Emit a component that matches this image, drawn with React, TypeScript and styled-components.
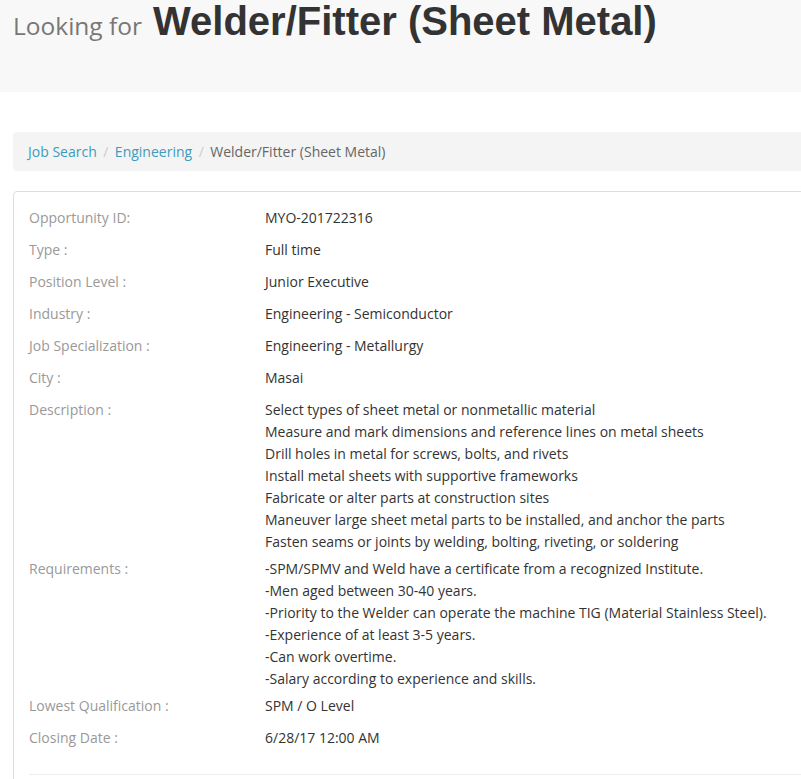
import * as React from 'react'
import styled, { createGlobalStyle } from 'styled-components'

const GlobalStyle = createGlobalStyle`
  html, body {
    margin: 0;
    padding: 0;
    background: #fff;
    overflow-x: hidden;
  }
  body {
    font-family: 'Open Sans', 'Liberation Sans', sans-serif;
    font-size: 14px;
    color: #333;
  }
`

interface IDetail {
  label: string
  lines: string[]
}

const details: IDetail[] = [
  { label: 'Opportunity ID:', lines: ['MYO-201722316'] },
  { label: 'Type :', lines: ['Full time'] },
  { label: 'Position Level :', lines: ['Junior Executive'] },
  { label: 'Industry :', lines: ['Engineering - Semiconductor'] },
  { label: 'Job Specialization :', lines: ['Engineering - Metallurgy'] },
  { label: 'City :', lines: ['Masai'] },
  {
    label: 'Description :',
    lines: [
      'Select types of sheet metal or nonmetallic material',
      'Measure and mark dimensions and reference lines on metal sheets',
      'Drill holes in metal for screws, bolts, and rivets',
      'Install metal sheets with supportive frameworks',
      'Fabricate or alter parts at construction sites',
      'Maneuver large sheet metal parts to be installed, and anchor the parts',
      'Fasten seams or joints by welding, bolting, riveting, or soldering'
    ]
  },
  {
    label: 'Requirements :',
    lines: [
      '-SPM/SPMV and Weld have a certificate from a recognized Institute.',
      '-Men aged between 30-40 years.',
      '-Priority to the Welder can operate the machine TIG (Material Stainless Steel).',
      '-Experience of at least 3-5 years.',
      '-Can work overtime.',
      '-Salary according to experience and skills.'
    ]
  },
  { label: 'Lowest Qualification :', lines: ['SPM / O Level'] },
  { label: 'Closing Date :', lines: ['6/28/17 12:00 AM'] }
]

const crumbs = ['Job Search', 'Engineering']

export default function App() {
  return (
    <>
      <GlobalStyle />
      <Header>
        <Lead>Looking for</Lead>
        <Title>Welder/Fitter (Sheet Metal)</Title>
      </Header>
      <Container>
        <Breadcrumb>
          {crumbs.map(c => (
            <Crumb key={c}>
              <CrumbLink href="#">{c}</CrumbLink>
              <Separator>/</Separator>
            </Crumb>
          ))}
          <Crumb active>Welder/Fitter (Sheet Metal)</Crumb>
        </Breadcrumb>
        <Panel>
          <DetailList>
            {details.map(d => (
              <React.Fragment key={d.label}>
                <Label>{d.label}</Label>
                <Value multi={d.lines.length > 1}>
                  {d.lines.map(l => (
                    <div key={l}>{l}</div>
                  ))}
                </Value>
              </React.Fragment>
            ))}
          </DetailList>
          <Rule />
        </Panel>
      </Container>
    </>
  )
}

const Header = styled.header`
  background: #f8f8f8;
  height: 92px;
  padding: 0 13px;
  display: flex;
  align-items: baseline;
  gap: 11px;
  white-space: nowrap;
`
const Lead = styled.span`
  font-family: 'Open Sans', sans-serif;
  font-size: 24.5px;
  color: #777;
  line-height: 44px;
`
const Title = styled.h1`
  margin: 0;
  font-family: 'Liberation Sans', Arial, sans-serif;
  font-weight: bold;
  font-size: 40px;
  color: #333;
  line-height: 42px;
`
const Container = styled.main`
  width: 820px;
  padding: 40px 0 0 13px;
`
const Breadcrumb = styled.ol`
  list-style: none;
  margin: 0 0 20px;
  padding: 9px 15px;
  background: #f4f4f4;
  border-radius: 4px;
  display: flex;
  line-height: 21px;
`
const Crumb = styled.li<{ active?: boolean }>`
  color: ${p => (p.active ? '#666' : 'inherit')};
`
const CrumbLink = styled.a`
  color: #3c9bbf;
  text-decoration: none;
`
const Separator = styled.span`
  color: #ccc;
  padding: 0 6.5px;
`
const Panel = styled.section`
  border: 1px solid #ddd;
  border-radius: 4px;
  padding: 15px 15px 0;
`
const DetailList = styled.div`
  display: grid;
  grid-template-columns: 236px 1fr;
  row-gap: 10px;
  line-height: 22px;
  padding-bottom: 25px;
`
const Label = styled.div`
  color: #999;
`
const Value = styled.div<{ multi?: boolean }>`
  color: #333;
  white-space: nowrap;
  margin-bottom: ${p => (p.multi ? '-5px' : '0')};
`
const Rule = styled.hr`
  margin: 0 0 20px;
  border: 0;
  border-top: 1px solid #eee;
`
